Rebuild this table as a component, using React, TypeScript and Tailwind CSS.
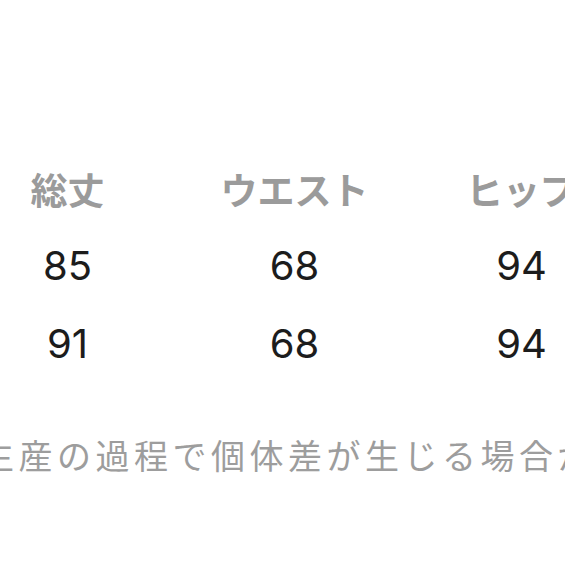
import React from "react";

const headers = ["総丈", "ウエスト", "ヒップ"];

const rows = [
  ["85", "68", "94"],
  ["91", "68", "94"],
];

const jp = "font-['Noto_Sans_CJK_JP',sans-serif]";

export default function App() {
  return (
    <div className="w-[565px] h-[565px] bg-white overflow-hidden flex flex-col">
      <div className="pt-[152px] ml-[-46px]">
        {/* header */}
        <div className="grid grid-cols-[227px_227px_227px] h-[76px]">
          {headers.map((h) => (
            <div
              key={h}
              className={`${jp} flex items-center justify-center whitespace-nowrap text-[37px] font-bold text-[#9b9b9b]`}
            >
              {h}
            </div>
          ))}
        </div>
        {/* values */}
        {rows.map((r, i) => (
          <div
            key={i}
            className={`grid grid-cols-[227px_227px_227px] ${i === 0 ? "h-[76px]" : "h-[80px]"}`}
          >
            {r.map((v, j) => (
              <div
                key={j}
                className="flex items-center justify-center font-['Inter',sans-serif] text-[40px] text-[#1c1c1c]"
              >
                {v}
              </div>
            ))}
          </div>
        ))}
      </div>
      {/* note */}
      <div className="h-[140px] flex items-center ml-[-20px]">
        <p className={`${jp} whitespace-nowrap text-[34px] tracking-[4.5px] text-[#9d9d9d]`}>
          生産の過程で個体差が生じる場合がございます。
        </p>
      </div>
    </div>
  );
}
